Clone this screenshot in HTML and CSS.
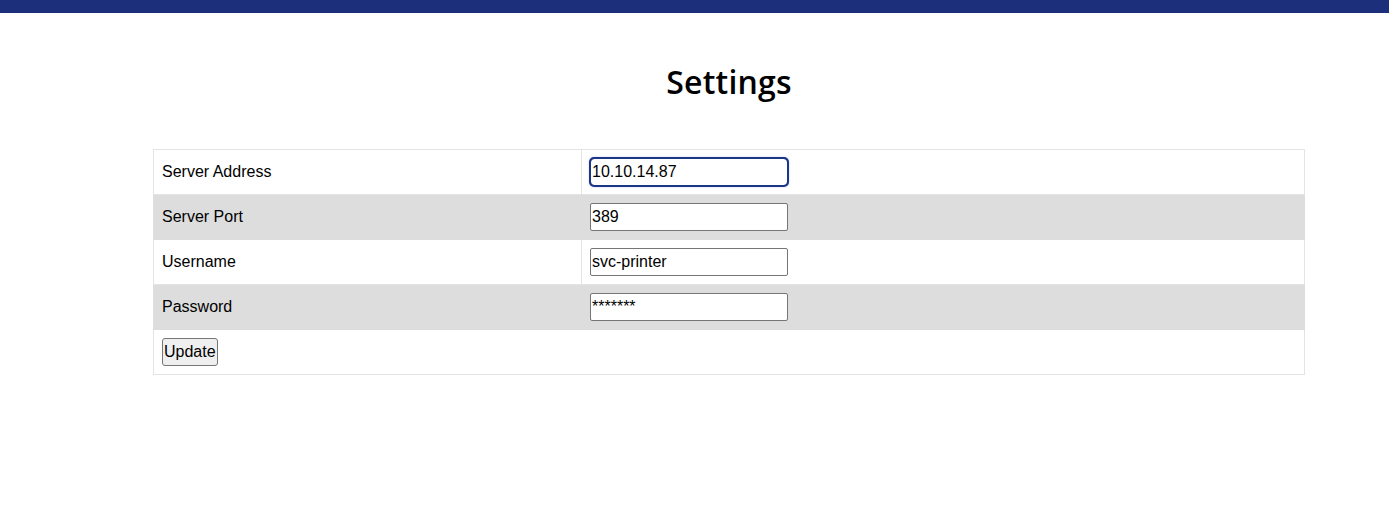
FILE: index.html
```html
<!DOCTYPE html>
<html lang="en">
<head>
<meta charset="utf-8">
<title>Settings</title>
<link rel="stylesheet" href="styles.css">
</head>
<body>
<div class="topbar"></div>
<main class="content">
  <h1 class="title">Settings</h1>
  <form class="settings-form">
    <table class="settings-table">
      <tr class="row">
        <td class="label-cell">Server Address</td>
        <td class="value-cell"><input class="field field-focused" type="text" value="10.10.14.87"></td>
      </tr>
      <tr class="row row-alt">
        <td class="label-cell">Server Port</td>
        <td class="value-cell"><input class="field" type="text" value="389"></td>
      </tr>
      <tr class="row">
        <td class="label-cell">Username</td>
        <td class="value-cell"><input class="field" type="text" value="svc-printer"></td>
      </tr>
      <tr class="row row-alt">
        <td class="label-cell">Password</td>
        <td class="value-cell"><input class="field" type="text" value="*******"></td>
      </tr>
      <tr class="row">
        <td class="label-cell" colspan="2"><button class="btn" type="button">Update</button></td>
      </tr>
    </table>
  </form>
</main>
</body>
</html>
```

FILE: styles.css
```css
html, body {
  margin: 0;
  padding: 0;
  background: #ffffff;
}

body {
  font-family: "Liberation Sans", Arial, sans-serif;
  font-size: 16px;
  color: #000;
}

.topbar {
  height: 13px;
  background: #1b2f7a;
}

.content {
  margin-left: 153px;
  width: 1152px;
}

.title {
  font-family: "Open Sans", "Noto Sans", sans-serif;
  font-weight: 600;
  font-size: 32px;
  line-height: 44px;
  text-align: center;
  margin: 47px 0 45px;
  color: #000;
  letter-spacing: 0.2px;
}

.settings-form {
  margin: 0;
}

.settings-table {
  width: 100%;
  border-collapse: collapse;
  border: 1px solid #dddddd;
}

.row-alt {
  background: #dddddd;
}

.label-cell,
.value-cell {
  border: 1px solid #e4e4e4;
  padding: 8px;
  height: 28px;
  vertical-align: middle;
  line-height: 18px;
}

.row-alt .label-cell,
.row-alt .value-cell {
  border-color: #dddddd;
}

.label-cell {
  width: 411px;
}

.field {
  box-sizing: border-box;
  display: block;
  width: 198px;
  height: 28px;
  padding: 0 1px;
  margin: 0;
  border: 1px solid #767676;
  border-radius: 2px;
  background: #ffffff;
  font-family: "Liberation Sans", Arial, sans-serif;
  font-size: 16px;
  color: #000;
}

.field-focused {
  outline: 2px solid #1a3688;
  outline-offset: -1px;
  border-color: #1a3688;
  border-radius: 4px;
  box-shadow: 0 0 2px 1px rgba(60, 100, 220, 0.35);
}

.btn {
  box-sizing: border-box;
  display: block;
  height: 28px;
  padding: 0 1px;
  margin: 0;
  border: 1px solid #767676;
  border-radius: 3px;
  background: #efefef;
  font-family: "Liberation Sans", Arial, sans-serif;
  font-size: 16px;
  color: #000;
}
```
